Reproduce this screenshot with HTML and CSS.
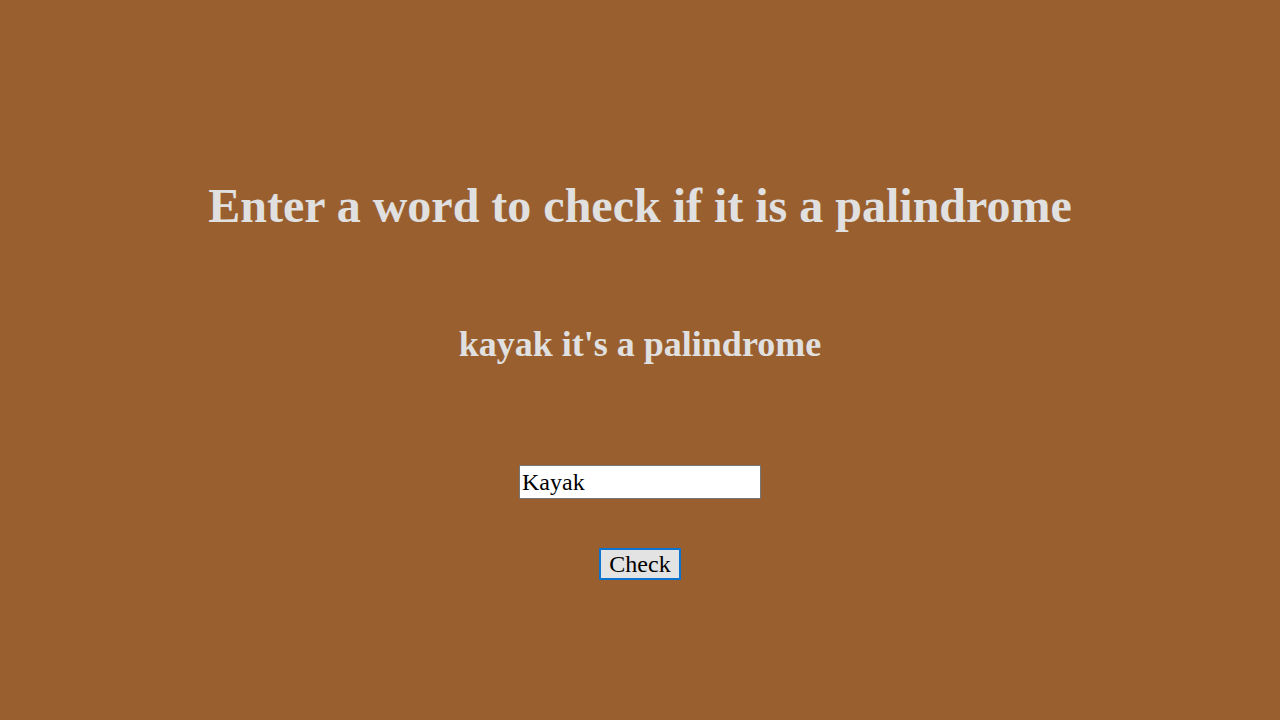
FILE: index.html
```html
<!DOCTYPE html>
<html>
<head>
<meta charset="utf-8">
<link rel="stylesheet" href="styles.css">
</head>
<body>
<main class="page">
  <h1 class="title">Enter a word to check if it is a palindrome</h1>
  <h2 class="result">kayak it's a palindrome</h2>
  <input class="word" type="text" value="Kayak">
  <button class="check">Check</button>
</main>
</body>
</html>
```
FILE: styles.css
```css
html, body {
  margin: 0;
  padding: 0;
  background: #9a5f2e;
  height: 100%;
}
.page {
  display: flex;
  flex-direction: column;
  align-items: center;
  padding-top: 178px;
  font-family: "Liberation Serif", "Times New Roman", serif;
  color: #e0e0e0;
}
.title {
  margin: 0;
  font-size: 48px;
  line-height: 55px;
  font-weight: bold;
}
.result {
  margin: 91px 0 0;
  font-size: 36px;
  line-height: 41px;
  font-weight: bold;
}
.word {
  margin-top: 100px;
  box-sizing: border-box;
  width: 242px;
  height: 34px;
  border: 1px solid #767676;
  padding: 1px 2px;
  background: #fff;
  color: #000;
  font-family: "Liberation Serif", "Times New Roman", serif;
  font-size: 24px;
  outline: none;
}
.check {
  margin-top: 49px;
  box-sizing: border-box;
  height: 32px;
  padding: 0 8px;
  border: 2px solid #0a74d0;
  background: #e3e3e3;
  color: #000;
  font-family: "Liberation Serif", "Times New Roman", serif;
  font-size: 24px;
  line-height: 28px;
}
```
